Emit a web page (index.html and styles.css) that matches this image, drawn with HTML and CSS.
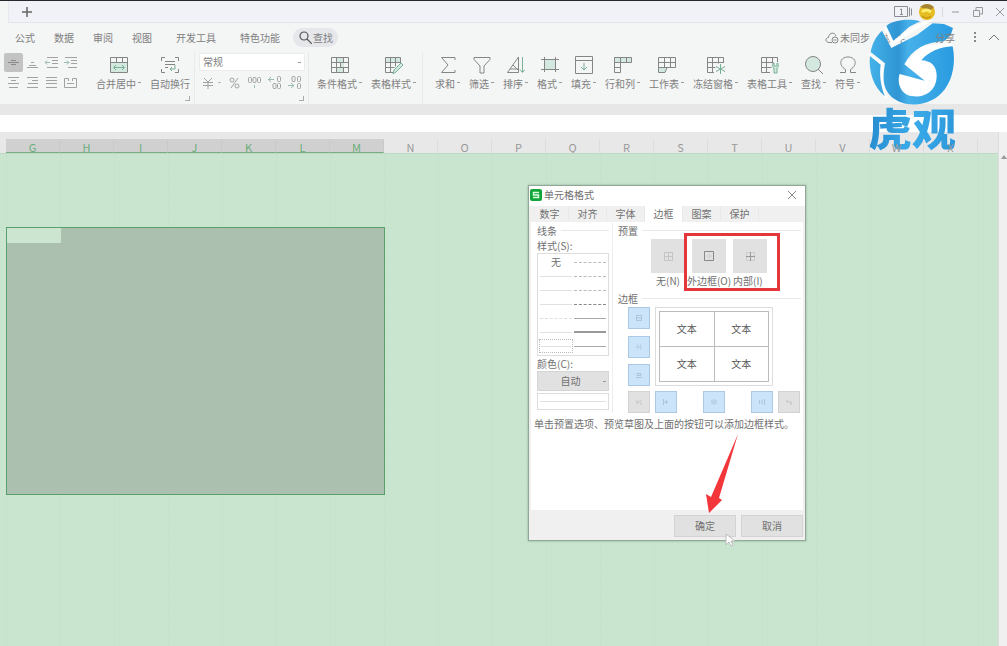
FILE: index.html
```html
<!DOCTYPE html>
<html lang="zh-CN">
<head>
<meta charset="utf-8">
<title>单元格格式</title>
<link rel="stylesheet" href="styles.css">
</head>
<body>
<header class="titlebar">
  <div class="tabstrip">
    <button class="newtab" aria-label="新建"><svg width="10" height="10"><path d="M5 0v10M0 5h10" stroke="#666" stroke-width="1.5"/></svg></button>
    <div class="wincontrols">
      <svg width="18" height="12" fill="none" stroke="#8c8c94"><path d="M.5 .5h13v10H.5zM15.500 1.500v9M17.500 2.500v7"/><path d="M6 3.500l1.500-.5v5M6 8.500h3"/></svg>
      <svg class="avatar" width="18" height="18"><circle cx="9" cy="9" r="8" fill="#e5bd22"/><path d="M2 4Q9-2 16 4L13 7 5 5z" fill="#a78334"/><path d="M4 9q4-4 9 0" stroke="#ffef70" stroke-width="3" fill="none"/><path d="M4 13q5 4 9 0" stroke="#b98505" fill="none"/></svg>
      <span class="sep"></span>
      <button aria-label="最小化"><svg width="10" height="10"><path d="M1 5h7" stroke="#999"/></svg></button>
      <button aria-label="还原"><svg width="10" height="10" fill="none" stroke="#999"><path d="M.5 3.500h6v6h-6zM3 3V.5h6.500V7H7"/></svg></button>
      <button aria-label="关闭"><svg width="10" height="10"><path d="M1 1l8 8M9 1l-8 8" stroke="#999"/></svg></button>
    </div>
  </div>
</header>
<nav class="menu">
  <a href="#">公式</a><a href="#">数据</a><a href="#">审阅</a><a href="#">视图</a><a href="#" class="wide">开发工具</a><a href="#" class="wide">特色功能</a>
  <button class="search"><svg width="13" height="13" fill="none" stroke="#555" stroke-width="1.200"><circle cx="5" cy="5" r="4"/><path d="M8 8l5 5"/></svg>查找</button>
  <div class="share">
    <button class="sync"><svg width="14" height="12" fill="none" stroke="#888"><path d="M7 10.500H4C0 10 0 6 3.500 5.500 4 0 10 0 11 4"/><circle cx="10" cy="8" r="3"/><path d="M8.500 8h3"/></svg>未同步</button>
    <a href="#" class="collab">协作</a><a href="#" class="shareto">分享</a>
    <button aria-label="更多"><svg width="4" height="11" fill="#888"><path d="M1 0h2v2H1zM1 4h2v2H1zM1 8h2v2H1z"/></svg></button>
    <button aria-label="收起"><svg width="12" height="7"><path d="M1 6l5-5 5 5" fill="none" stroke="#777"/></svg></button>
  </div>
</nav>
<section class="ribbon">
  <div class="aligns">
    <button class="on" aria-label="垂直居中"><svg viewBox="0 0 13 13"><path d="M4 4.500h5M1 6.500h11M4 8.500h5"/></svg></button>
    <button aria-label="底端对齐"><svg viewBox="0 0 13 13"><path d="M5 6.500h3M3 9.500h7M1 11.500h11"/></svg></button>
    <button aria-label="减少缩进"><svg viewBox="0 0 13 13"><path d="M2 1.500h11M7 4.500h6M7 7.500h6M2 11.500h11"/><path class="g" d="M0 6.500h5M2 4.500l-2 2 2 2"/></svg></button>
    <button aria-label="增加缩进"><svg viewBox="0 0 13 13"><path d="M1 1.500h12M7 4.500h6M7 7.500h6M4 11.500h9"/><path class="g" d="M0 6.500h5M3 4.500l2 2-2 2"/></svg></button>
    <button aria-label="居中"><svg viewBox="0 0 13 13"><path d="M1 1.500h11M4 4.500h5M1 7.500h11M2 11.500h9"/></svg></button>
    <button aria-label="右对齐"><svg viewBox="0 0 13 13"><path d="M1 1.500h11M6 4.500h6M2 7.500h10M1 11.500h11"/></svg></button>
    <button aria-label="两端对齐"><svg viewBox="0 0 13 13"><path d="M1 1.500h11M1 4.500h11M1 7.500h11M1 11.500h11"/></svg></button>
    <button aria-label="分散对齐"><svg viewBox="0 0 13 13"><path d="M4.500 5V2.500h-4v9h12v-9h-4V5M3 7.500h7"/></svg></button>
  </div>
  <div class="group merge corner">
    <button class="tool"><svg viewBox="0 0 18 18"><path class="f" d="M1 6h16v10H1z"/><path d="M.5 1.500h17v15H.5zM.5 6.500h17M6.500 1.500v5M12.500 1.500v5"/><path class="g" d="M4 11.500h10M6 9l-2.500 2.500L6 14M12 9l2.500 2.500L12 14"/></svg><span class="cap">合并居中<i></i></span></button>
    <button class="tool"><svg viewBox="0 0 18 18"><path d="M.5 5V1.500H4M14 1.500h3.500V5M.5 13v3.500H4M14 16.500h3.500V13M4 5.500h10M4 8.500h10M4 11.500h3"/><path class="g" d="M14 9v4H9M11 11l-2 2 2 2"/></svg><span class="cap">自动换行</span></button>
  </div>
  <div class="group number corner">
    <div class="fmt"><select aria-label="数字格式"><option>常规</option></select><i></i></div>
    <div class="nums">
      <button aria-label="货币"><svg width="19" height="12"><path d="M1 1l4 4 4-4M5 5v7M0 5.500h10M0 8.500h10"/><path d="M15.500 5.500h2"/></svg></button>
      <button aria-label="百分比"><svg width="11" height="12"><circle cx="3" cy="3" r="2"/><circle cx="8" cy="9" r="2"/><path d="M9 1L2 11"/></svg></button>
      <button aria-label="千分位"><svg width="13" height="12"><rect x=".5" y=".5" width="3" height="5" rx="1"/><rect x="5" y=".5" width="3" height="5" rx="1"/><rect x="9.500" y=".5" width="3" height="5" rx="1"/><path class="g" d="M6.500 8v3"/></svg></button>
      <button aria-label="增加小数"><svg width="13" height="13"><path class="g" d="M0 3.500h6M3 1L.5 3.500 3 6"/><rect x="9.500" y=".5" width="3" height="5" rx="1"/><rect x="5" y="7.500" width="3" height="5" rx="1"/><rect x="9.500" y="7.500" width="3" height="5" rx="1"/></svg></button>
      <button aria-label="减少小数"><svg width="13" height="13"><path class="g" d="M0 9.500h6M3 7l3 2.500L3 12"/><rect x="4" y=".5" width="3" height="5" rx="1"/><rect x="9.500" y=".5" width="3" height="5" rx="1"/><rect x="9.500" y="7.500" width="3" height="5" rx="1"/></svg></button>
    </div>
  </div>
  <div class="group styles">
    <button class="tool"><svg viewBox="0 0 18 18"><path class="f" d="M5 2h8v4H5zM9 7h4v4H9zM5 12h8v4H5z"/><path d="M.5 1.500h17v15H.5zM.5 6.500h17M.5 11.500h17M5.500 1.500v15M12.500 1.500v5M9.500 6.500v5M12.500 11.500v5"/></svg><span class="cap">条件格式<i></i></span></button>
    <button class="tool"><svg viewBox="0 0 18 18"><path class="f" d="M1 2h15v4H1z"/><path d="M8 16.500H.5v-15h15V7M.5 6.500h15M.5 11.500h9M5.500 1.500v15M10.500 1.500v9"/><path class="g f" d="M8 18l1-4 7-7 2 2-7 7z"/></svg><span class="cap">表格样式<i></i></span></button>
  </div>
  <div class="group last">
    <button class="tool"><svg viewBox="0 0 18 18"><path d="M16 4V1.500H2.500L9 9l-6.500 7.500H16V14"/></svg><span class="cap">求和<i></i></span></button>
    <button class="tool"><svg viewBox="0 0 18 18"><path d="M1 1.500h16v2L11 10v7H7v-7L1 3.500z"/></svg><span class="cap">筛选<i></i></span></button>
    <button class="tool"><svg viewBox="0 0 18 18"><path d="M.5 16.500L11.500 1v15.500zM6 9l5 5M3 13h8"/><path class="g" d="M15.500 1v15M13 13.500l2.500 3 2.500-3"/></svg><span class="cap">排序<i></i></span></button>
    <button class="tool"><svg viewBox="0 0 18 18"><path class="f" d="M3 4h12v9H3z"/><path d="M3.500 1v15M14.500 1v15M0 3.500h18M0 13.500h18"/></svg><span class="cap">格式<i></i></span></button>
    <button class="tool"><svg viewBox="0 0 18 18"><path d="M.5 .5h17v17H.5zM.5 4.500h17"/><path class="g" d="M9 7v7M6 11l3 3 3-3"/></svg><span class="cap">填充<i></i></span></button>
    <button class="tool"><svg viewBox="0 0 18 18"><path class="f" d="M1 2h16v4H1z"/><path d="M.5 1.500h17v5H.5zM6.500 1.500v15h-6v-15M12.500 1.500v5M.5 11.500h6"/></svg><span class="cap">行和列<i></i></span></button>
    <button class="tool"><svg viewBox="0 0 18 18"><path class="f" d="M1 12h8l-2 4H1z"/><path d="M.5 1.500h17v10H.5zM.5 6.500h17M6.500 1.500v10M12.500 1.500v10M.5 11.500v5H7l2-5"/></svg><span class="cap">工作表<i></i></span></button>
    <button class="tool"><svg viewBox="0 0 18 18"><path d="M7 16.500H.5v-15h16V7M.5 6.500h16M.5 11.500h8M5.500 1.500v15M11.500 1.500v6"/><path class="g" d="M13.500 8v10M9 10.500l9 5M18 10.500l-9 5"/></svg><span class="cap">冻结窗格<i></i></span></button>
    <button class="tool"><svg viewBox="0 0 18 18"><path d="M9 16.500H.5v-15h16V6M.5 6.500h12M.5 11.500h10M5.500 1.500v15M11.500 1.500v6"/><path class="g f" d="M13 7c-3 2-1 5 0 5v5h3v-5c2-1 3-4 0-5v3h-3z"/></svg><span class="cap">表格工具<i></i></span></button>
    <button class="tool"><svg viewBox="0 0 18 18"><circle class="f" cx="8" cy="8" r="7.500"/><circle cx="8" cy="8" r="7.500"/><path d="M13 13l5 5"/></svg><span class="cap">查找<i></i></span></button>
    <button class="tool"><svg viewBox="0 0 18 18"><path d="M1 16.500h5.500v-3C-1 9 1 1 9 1s10 8 2.500 12.500v3H17"/></svg><span class="cap">符号<i></i></span></button>
  </div>
</section>
<div class="strip"></div>
<div class="formula"></div>
<main class="sheet">
  <div class="area">
    <div class="cols">
      <span class="sel">G</span><span class="sel">H</span><span class="sel">I</span><span class="sel">J</span><span class="sel">K</span><span class="sel">L</span><span class="sel">M</span><span>N</span><span>O</span><span>P</span><span>Q</span><span>R</span><span>S</span><span>T</span><span>U</span><span>V</span><span>W</span><span>X</span><span></span>
    </div>
    <div class="cells"><div class="range"><div class="active"></div></div></div>
  </div>
  <div class="scroll"><svg width="7" height="6"><path d="M1 5l3-4 3 4z" fill="#999"/></svg></div>
</main>

<section class="dialog" role="dialog" aria-labelledby="dt">
  <div class="dtitle">
    <svg width="12" height="12"><rect width="12" height="12" rx="2" fill="#12a53a"/><path d="M9 3.500H3.500v2.500h5v2.500H3" fill="none" stroke="#d8ffe0" stroke-width="1.500"/></svg>
    <span id="dt">单元格格式</span>
    <button aria-label="关闭"><svg width="8" height="8"><path d="M0 0l8 8M8 0L0 8" stroke="#888"/></svg></button>
  </div>
  <div class="dtabs"><button>数字</button><button>对齐</button><button>字体</button><button class="cur">边框</button><button>图案</button><button>保护</button></div>
  <div class="panel">
    <div class="two">
      <div class="lines">
        <h3>线条</h3>
        <h4>样式(S):</h4>
        <div class="list">
          <span class="none">无</span><span><b class="d1"></b></span>
          <span><b class="lt"></b></span><span><b class="d1"></b></span>
          <span><b class="lt"></b></span><span><b class="d1"></b></span>
          <span><b class="lt"></b></span><span><b class="d2"></b></span>
          <span><b class="d0"></b></span><span><b class="s1"></b></span>
          <span><b class="lt"></b></span><span><b class="s2"></b></span>
          <span class="pick"><b class="lt"></b></span><span><b class="s1"></b></span>
        </div>
        <label for="color">颜色(C):</label>
        <div class="color"><select id="color"><option>自动</option></select><i></i></div>
        <div class="sample"><b class="lt"></b></div>
      </div>
      <div class="right">
        <h3>预置</h3>
        <div class="presets">
          <div class="preset"><button id="p1"><svg width="9" height="9" stroke="#c4c4c4"><path d="M.5 .5h8v8h-8zM4.500 0v9M0 4.500h9"/></svg></button><label for="p1">无(N)</label></div>
          <div class="preset"><button id="p2"><svg width="10" height="10" stroke="#888"><path d="M.5 .5h9v9h-9z"/><path d="M5 2v6M2 5h6" stroke="#d0d0d0"/></svg></button><label for="p2">外边框(O)</label></div>
          <div class="preset"><button id="p3"><svg width="9" height="9" stroke="#999"><path d="M.5 .5h8v8h-8z" stroke="#ccc"/><path d="M4.500 0v9M0 4.500h9"/></svg></button><label for="p3">内部(I)</label></div>
        </div>
        <h3>边框</h3>
        <div class="borders">
          <div class="side">
            <button aria-label="上边框"><svg width="6" height="6"><path d="M.5 .5h5v5h-5zM1 3h4"/></svg></button>
            <button aria-label="中横线"><svg width="6" height="6"><path d="M0 3h6M1 1h1M4 1h1M1 5h1M4 5h1"/></svg></button>
            <button aria-label="下边框"><svg width="6" height="6"><path d="M0 5.500h6M1 1.500h4v2H1z"/></svg></button>
          </div>
          <div class="preview"><div class="quad"><span>文本</span><span>文本</span><span>文本</span><span>文本</span></div></div>
          <button class="grey diag" aria-label="斜线"><svg width="6" height="6"><path d="M1 5l4-4M1 1v4M5 3v3"/></svg></button>
          <div class="bottom">
            <button aria-label="左边框"><svg width="6" height="6"><path d="M.5 0v6M3.500 1v4M1 3h4"/></svg></button>
            <button aria-label="中竖线"><svg width="6" height="6"><path d="M3 0v6M1 1v4M5 1v4"/></svg></button>
            <button aria-label="右边框"><svg width="6" height="6"><path d="M5.500 0v6M.5 1v4M3 1v4"/></svg></button>
          </div>
          <button class="grey" aria-label="反斜线"><svg width="6" height="6"><path d="M1 1l4 4M1 1v3M5 2v4"/></svg></button>
        </div>
      </div>
    </div>
    <p>单击预置选项、预览草图及上面的按钮可以添加边框样式。</p>
  </div>
  <div class="actions"><button>确定</button><button>取消</button></div>
  <div class="frame"></div>
  <svg class="arrow" width="34" height="80"><path d="M34 0L15 64l3 2L5 79 2 60l5 3z" fill="#f3363a"/></svg>
  <svg class="cursor" width="10" height="14"><path d="M1 1v11l3-3 2 4 2-1-2-4h4z" fill="#fff" stroke="#bbb"/></svg>
</section>

<div class="watermark">
  <svg viewBox="0 0 288 288" width="96" height="96">
    <defs><linearGradient id="b" gradientUnits="userSpaceOnUse" x1="15" y1="0" x2="270" y2="0"><stop offset="0" stop-color="#45b3ea"/><stop offset=".34" stop-color="#2f95d3"/><stop offset=".46" stop-color="#46b0ea"/><stop offset="1" stop-color="#299be0"/></linearGradient></defs>
    <path d="M60 40L84 98 150 50 212 16 180 22 140 42 90 78 70 34zM15 118L56 148 58 215 72 256 60 248 46 160 16 128zM120 154L170 96 262 88 270 98 200 120 172 140C205 140 224 165 222 200 210 255 110 270 103 205L106 178 182 200z" fill="#fff"/>
    <path d="M67 36C85 20 130 12 168 22L136 38 88 80z" fill="url(#b)"/>
    <path d="M54 50L82 102 160 62 206 28 240 30 267 42 260 64 240 82C185 84 145 105 121 151L182 200 107 180C98 205 110 245 148 247 190 250 218 225 218 185 218 155 200 140 172 139 195 112 225 100 266 97 276 145 266 195 243 225 205 278 125 285 82 248 55 222 56 190 63 148L20 114C25 88 35 68 54 50z" fill="url(#b)"/>
    <path d="M18 126L50 152C45 190 52 220 63 247 28 220 13 170 18 126z" fill="url(#b)"/>
  </svg>
  <div class="brand">虎观</div>
</div>
</body>
</html>
```

FILE: styles.css
```css
* { box-sizing: border-box; }
body {
  margin: 0; min-height: 100vh; display: flex; flex-direction: column; position: relative; overflow: hidden;
  font: 10px/14px "Noto Sans CJK SC", sans-serif; color: #808080; background: #f4f5f5;
}
button, select { font: inherit; color: inherit; border: 0; padding: 0; margin: 0; background: none; border-radius: 0; }
a { color: inherit; text-decoration: none; }
svg { display: block; flex: none; }
h3, h4, p { margin: 0; font-weight: 400; font-size: 10px; }
i { display: block; width: 3px; height: 1px; background: #999; }

.titlebar { border-top: 1px solid #29262d; padding-left: 8px; }
.tabstrip { height: 22px; display: flex; align-items: center; justify-content: space-between; background: #f1f2f7; border-bottom: 1px solid #e2e3e8; border-left: 1px solid #e8e9ee; padding: 0 2px 0 13px; }
.wincontrols { display: flex; align-items: center; gap: 12px; }
.avatar { margin-left: -6px; }
.sep { width: 1px; height: 10px; background: #d8d8dd; margin: 0 -4px 0 -6px; }

.menu { display: flex; align-items: center; gap: 19px; height: 29px; padding: 0 7px 0 15px; white-space: nowrap; }
.menu .wide { margin-left: 5px; }
.search { display: flex; align-items: center; gap: 1px; height: 19px; padding: 0 5px 0 6px; margin-left: -6px; border-radius: 10px; background: #e5e7ea; }
.share { margin-left: auto; display: flex; align-items: center; gap: 15px; }
.sync { display: flex; align-items: center; gap: 1px; }
.shareto { margin: 0 3px 0 15px; position: relative; z-index: 3; }
.share button:last-child { margin-left: -4px; }

.ribbon { display: flex; height: 52px; padding-left: 4px; white-space: nowrap; }
.aligns { display: grid; grid-template-columns: repeat(4, 19px); grid-template-rows: 19px 19px; gap: 1px 0; align-content: start; padding-top: 1px; }
.aligns button { display: grid; place-items: center; }
.aligns .on { background: #c3c3c3; border-radius: 2px; }
.aligns svg { width: 13px; height: 13px; }
.ribbon svg { fill: none; stroke: #858585; }
.ribbon .aligns svg, .ribbon .nums svg { stroke: #a2a2a2; }
.ribbon .aligns .on svg { stroke: #8a8a8a; }
.ribbon svg .g { stroke: #79b197; }
.ribbon .nums svg .g, .ribbon .aligns svg .g { stroke: #9cbcac; }
.ribbon svg .f { fill: #d3e8df; stroke: none; }
.ribbon svg .g.f { stroke: #79b197; }
.group { display: flex; gap: 9px; padding-top: 4px; border-right: 1px solid #e9e9e9; position: relative; }
.corner::after { content: ""; position: absolute; right: 4px; bottom: 3px; width: 4px; height: 4px; border: 1px solid #aaa; border-width: 0 1px 1px 0; }
.merge { padding-left: 16px; padding-right: 4px; }
.tool { display: flex; flex-direction: column; align-items: center; gap: 3px; height: 36px; }
.tool svg { width: 18px; height: 18px; }
.cap { display: flex; align-items: center; gap: 2px; }
.cap i { margin-bottom: 4px; }
.number { flex-direction: column; gap: 3px; padding: 1px 3px 0 4px; }
.fmt { display: flex; align-items: center; width: 106px; height: 18px; background: #fff; border: 1px solid #ececec; border-radius: 2px; padding-right: 3px; }
.fmt select { appearance: none; flex: 1; padding-left: 3px; }
.nums { display: flex; justify-content: space-between; padding: 2px 4px; }
.styles { padding-left: 8px; padding-right: 6px; }
.last { padding-left: 12px; border: 0; }

.strip { height: 11px; background: #e7e7e7; }
.formula { height: 17px; background: #fff; }
.sheet { flex: 1; display: flex; background: #e8e8e8; }
.area { flex: 1; min-width: 0; display: flex; flex-direction: column; }
.cols { display: flex; height: 22px; padding: 7px 0 0 6px; overflow: hidden; border-bottom: 1px solid #bdd8c3; position: relative; }
.cols span { flex: none; width: 54px; line-height: 16px; font-size: 11px; text-align: center; border-right: 1px solid #ddd; color: #999; position: relative; z-index: 3; }
.cols .sel { background: #d0d0d0; color: #69ae7a; border-bottom: 1px solid #79ae84; border-right-color: #cacaca; }
.cells {
  flex: 1; padding: 73px 0 0 6px; background-color: #c9e5cf;
  background-image: linear-gradient(90deg, #c5e3cc 1px, transparent 1px), linear-gradient(#c6e3cc 1px, transparent 1px);
  background-size: 54px 15px; background-position: 6px -2px;
}
.range { width: 379px; height: 268px; background: #abc0ae; border: 1px solid #58a16b; }
.active { width: 54px; height: 15px; background: #cbe5d0; }
.scroll { width: 9px; padding: 22px 1px; background: #f0f0f0; border-left: 1px solid #ddd; }

.dialog { position: absolute; left: 528px; top: 185px; width: 278px; background: #f0f0f0; border: 1px solid #91a797; padding: 0 2px; box-shadow: 0 0 2px #8aa892; color: #707070; }
.dtitle { display: flex; align-items: center; gap: 2px; height: 20px; line-height: 18px; background: #fff; margin: 0 -2px; padding: 0 9px 2px 1px; }
.dtitle button { margin-left: auto; }
.dtabs { display: flex; }
.dtabs button { width: 38px; height: 16px; line-height: 16px; border-right: 1px solid #e9e9e9; }
.dtabs .cur { background: #fff; }
.panel { background: #fff; height: 288px; padding: 1px 2px 0 3px; }
.two { display: flex; gap: 5px; padding-left: 3px; }
.lines { width: 76px; border-right: 1px solid #eee; padding-right: 3px; }
.lines h3, .right h3 { display: flex; align-items: center; gap: 4px; height: 15px; line-height: 15px; }
.lines h3::after, .right h3::after { content: ""; flex: 1; height: 1px; background: #e8e8e8; }
.lines h4, .lines label { display: block; height: 15px; line-height: 15px; }
.list { display: grid; grid-template-columns: 1fr 1fr; grid-auto-rows: 14px; border: 1px solid #ddd; padding: 1px; height: 103px; }
.list span { display: flex; align-items: center; padding: 0 1px; }
.list .none { justify-content: center; }
.list .pick { border: 1px dotted #bbb; }
b { display: block; width: 100%; border-top: 1px solid #a8a8a8; }
.lt { border-top-color: #e0e0e0; }
.d0 { border-top: 1px dashed #ddd; }
.d1 { border-top: 1px dashed #bbb; }
.d2 { border-top: 1px dashed #888; }
.s2 { border-top: 2px solid #999; }
.color { display: flex; align-items: center; height: 20px; background: #e1e1e1; border: 1px solid #d5d5d5; padding-right: 2px; margin-bottom: 2px; }
.color select { appearance: none; flex: 1; text-align: center; text-align-last: center; }
.sample { height: 17px; border: 1px solid #ddd; padding: 7px 2px; }
.right { flex: 1; }
.presets { display: grid; grid-template-columns: repeat(3, 34px); gap: 7px; padding: 1px 0 0 33px; height: 53px; }
.preset { display: flex; flex-direction: column; align-items: center; gap: 1px; white-space: nowrap; }
.preset button { width: 34px; height: 34px; flex: none; display: grid; place-items: center; background: #e1e1e1; }
.preset label { display: flex; justify-content: center; width: 34px; }
.preset:last-child label { justify-content: flex-start; }
.preset svg, .borders svg { fill: none; }
.borders { display: grid; grid-template-columns: 22px 118px 22px; gap: 5px; padding: 1px 0 0 10px; }
.side { display: flex; flex-direction: column; justify-content: space-between; height: 79px; }
.borders button { width: 22px; height: 22px; display: grid; place-items: center; background: #cce4f9; border: 1px solid #a9c9e6; }
.borders button svg { stroke: #abc4db; }
.borders .grey { background: #e1e1e1; border-color: #d2d2d2; }
.borders .grey svg { stroke: #c4c4c4; }
.borders .diag { grid-column: 1; }
.preview { border: 1px solid #ddd; padding: 3px; }
.quad { height: 100%; display: grid; grid-template-columns: 1fr 1fr; grid-template-rows: 1fr 1fr; border: 1px solid #bbb; border-width: 1px 0 0 1px; }
.quad span { display: grid; place-items: center; border: 1px solid #bbb; border-width: 0 1px 1px 0; color: #555; }
.bottom { display: flex; justify-content: space-between; }
.panel p { margin-top: 4px; white-space: nowrap; }
.actions { display: flex; justify-content: flex-end; gap: 5px; padding: 5px 0 3px; }
.actions button { width: 62px; height: 22px; background: #e1e1e1; border: 1px solid #d3d3d3; }
.frame { position: absolute; left: 155px; top: 47px; width: 96px; height: 58px; border: 3px solid #e4373c; }
.arrow { position: absolute; left: 175px; top: 248px; }
.cursor { position: absolute; left: 196px; top: 347px; }

.watermark { position: absolute; left: 864px; top: 14px; }
.brand { margin: -7px 0 0 4px; font-size: 44px; line-height: 48px; font-weight: 900; background: linear-gradient(100deg, #2389cd, #3aaae8 50%, #2a95da); background-clip: text; -webkit-background-clip: text; color: transparent; }
```
